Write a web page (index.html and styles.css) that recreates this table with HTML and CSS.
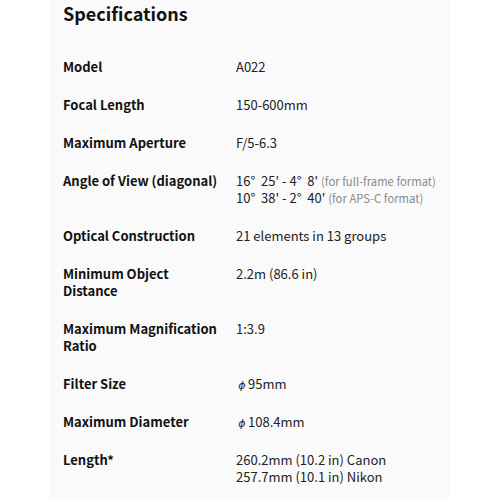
FILE: index.html
```html
<!DOCTYPE html>
<html>
<head>
<meta charset="utf-8">
<link rel="stylesheet" href="styles.css">
</head>
<body>
<div class="panel">
  <h2 class="title">Specifications</h2>
  <div class="specs">
    <div class="row"><div class="label">Model</div><div class="value">A022</div></div>
    <div class="row"><div class="label">Focal Length</div><div class="value">150-600mm</div></div>
    <div class="row"><div class="label">Maximum Aperture</div><div class="value">F/5-6.3</div></div>
    <div class="row"><div class="label">Angle of View (diagonal)</div><div class="value"><div class="line">16°&nbsp; 25' - 4°&nbsp; 8' <span class="note">(for full-frame format)</span></div><div class="line">10°&nbsp; 38' - 2°&nbsp; 40' <span class="note">(for APS-C format)</span></div></div></div>
    <div class="row"><div class="label">Optical Construction</div><div class="value">21 elements in 13 groups</div></div>
    <div class="row"><div class="label">Minimum Object Distance</div><div class="value">2.2m (86.6 in)</div></div>
    <div class="row"><div class="label">Maximum Magnification Ratio</div><div class="value">1:3.9</div></div>
    <div class="row"><div class="label">Filter Size</div><div class="value"><span class="phi">ϕ</span>95mm</div></div>
    <div class="row"><div class="label">Maximum Diameter</div><div class="value"><span class="phi">ϕ</span>108.4mm</div></div>
    <div class="row"><div class="label">Length*</div><div class="value"><div class="line">260.2mm (10.2 in) Canon</div><div class="line">257.7mm (10.1 in) Nikon</div></div></div>
  </div>
</div>
</body>
</html>
```

FILE: styles.css
```css
html, body {
  margin: 0;
  padding: 0;
  background: #ffffff;
}
body {
  font-family: "Noto Sans CJK JP", "Noto Sans", sans-serif;
  color: #1a1a1a;
}
.panel {
  margin-left: 50px;
  width: 400px;
  height: 500px;
  background: #fafafa;
  padding-left: 13px;
  box-sizing: border-box;
  overflow: hidden;
}
.title {
  margin: 0;
  font-size: 18px;
  line-height: 26px;
  font-weight: 700;
  color: #111;
}
.specs {
  margin-top: 32px;
  display: flex;
  flex-direction: column;
  gap: 21px;
}
.row {
  display: grid;
  grid-template-columns: 173px 1fr;
  font-size: 13px;
  line-height: 17px;
}
.label {
  font-weight: 700;
  color: #111;
  padding-right: 10px;
}
.value {
  color: #222;
}
.line {
  height: 17px;
}
.note {
  font-size: 11.3px;
  line-height: 10px;
  color: #8a8a8a;
}
.phi {
  display: inline-block;
  width: 12px;
  height: 10px;
  line-height: 10px;
  text-align: center;
  font-family: "DejaVu Sans", sans-serif;
  font-style: italic;
  font-size: 11px;
}
```
